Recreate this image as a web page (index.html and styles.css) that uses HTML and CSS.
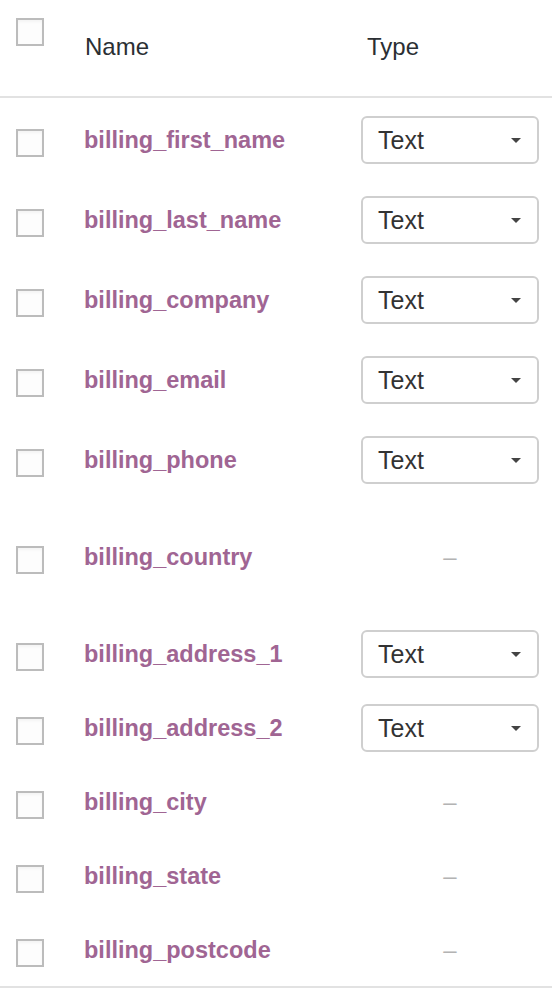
FILE: index.html
```html
<!DOCTYPE html>
<html lang="en">
<head>
    <meta charset="UTF-8">
    <title>Fields</title>
    <link rel="stylesheet" href="styles.css">
</head>
<body>
    <table class="fields">
        <thead>
            <tr>
                <th class="check"><span class="box"></span></th>
                <th class="name">Name</th>
                <th class="type">Type</th>
            </tr>
        </thead>
        <tbody>
            <tr>
                <td class="check"><span class="box"></span></td>
                <td class="name">billing_first_name</td>
                <td class="type"><div class="select">Text</div></td>
            </tr>
            <tr>
                <td class="check"><span class="box"></span></td>
                <td class="name">billing_last_name</td>
                <td class="type"><div class="select">Text</div></td>
            </tr>
            <tr>
                <td class="check"><span class="box"></span></td>
                <td class="name">billing_company</td>
                <td class="type"><div class="select">Text</div></td>
            </tr>
            <tr>
                <td class="check"><span class="box"></span></td>
                <td class="name">billing_email</td>
                <td class="type"><div class="select">Text</div></td>
            </tr>
            <tr class="tall">
                <td class="check"><span class="box"></span></td>
                <td class="name">billing_phone</td>
                <td class="type"><div class="select">Text</div></td>
            </tr>
            <tr class="tall">
                <td class="check"><span class="box"></span></td>
                <td class="name">billing_country</td>
                <td class="type"><span class="none">–</span></td>
            </tr>
            <tr class="short">
                <td class="check"><span class="box"></span></td>
                <td class="name">billing_address_1</td>
                <td class="type"><div class="select">Text</div></td>
            </tr>
            <tr class="short">
                <td class="check"><span class="box"></span></td>
                <td class="name">billing_address_2</td>
                <td class="type"><div class="select">Text</div></td>
            </tr>
            <tr class="short">
                <td class="check"><span class="box"></span></td>
                <td class="name">billing_city</td>
                <td class="type"><span class="none">–</span></td>
            </tr>
            <tr class="short">
                <td class="check"><span class="box"></span></td>
                <td class="name">billing_state</td>
                <td class="type"><span class="none">–</span></td>
            </tr>
            <tr class="last">
                <td class="check"><span class="box"></span></td>
                <td class="name">billing_postcode</td>
                <td class="type"><span class="none">–</span></td>
            </tr>
        </tbody>
    </table>
</body>
</html>
```

FILE: styles.css
```css
body{
    margin:0;
    background:#fff;
    font-family:"Liberation Sans", Arial, sans-serif;
}
table.fields{
    width:552px;
    border-collapse:separate;
    border-spacing:0;
    table-layout:fixed;
}
.fields th,.fields td{
    padding:0;
    text-align:left;
    vertical-align:top;
    box-sizing:border-box;
}
.fields .check{
    width:84px;
    padding-left:16px;
}
.fields .type{
    width:191px;
}
/*表头*/
.fields thead tr{
    height:98px;
}
.fields th{
    font-weight:normal;
    font-size:24px;
    line-height:28px;
    color:#2b2f33;
    padding-top:33px;
    border-bottom:2px solid #e2e2e2;
}
.fields th.check{
    padding-top:18px;
}
.fields th.name{
    padding-left:1px;
}
.fields th.type{
    padding-left:6px;
}
/*行*/
.fields tbody tr{height:80px;}
.fields tbody tr.tall{height:97px;}
.fields tbody tr.short{height:74px;}
.fields tbody tr.last{height:80px;}
.fields tr.last td{
    border-bottom:2px solid #e2e2e2;
}
.fields td.check{
    padding-top:31px;
}
.box{
    display:block;
    width:28px;height:28px;
    box-sizing:border-box;
    border:2px solid #bcbcbc;
    background:#fdfdfd;
    box-shadow:inset 0 2px 3px rgba(0,0,0,0.04);
}
.fields td.name{
    padding-top:29px;
    font-size:23.5px;
    line-height:26px;
    font-weight:bold;
    color:#a06593;
}
.fields td.type{
    padding-top:18px;
}
.select{
    position:relative;
    width:178px;height:48px;
    box-sizing:border-box;
    border:2px solid #cfcfcf;
    border-radius:6px;
    padding-left:15px;
    font-size:25px;
    line-height:44px;
    color:#333;
}
.select:after{
    content:"";
    position:absolute;
    right:16px;
    top:20px;
    border-top:5px solid #444;
    border-left:5.5px solid transparent;
    border-right:5.5px solid transparent;
}
.none{
    display:block;
    width:178px;
    margin-top:11px;
    text-align:center;
    font-size:24px;
    line-height:26px;
    color:#b3b3b3;
}
```
